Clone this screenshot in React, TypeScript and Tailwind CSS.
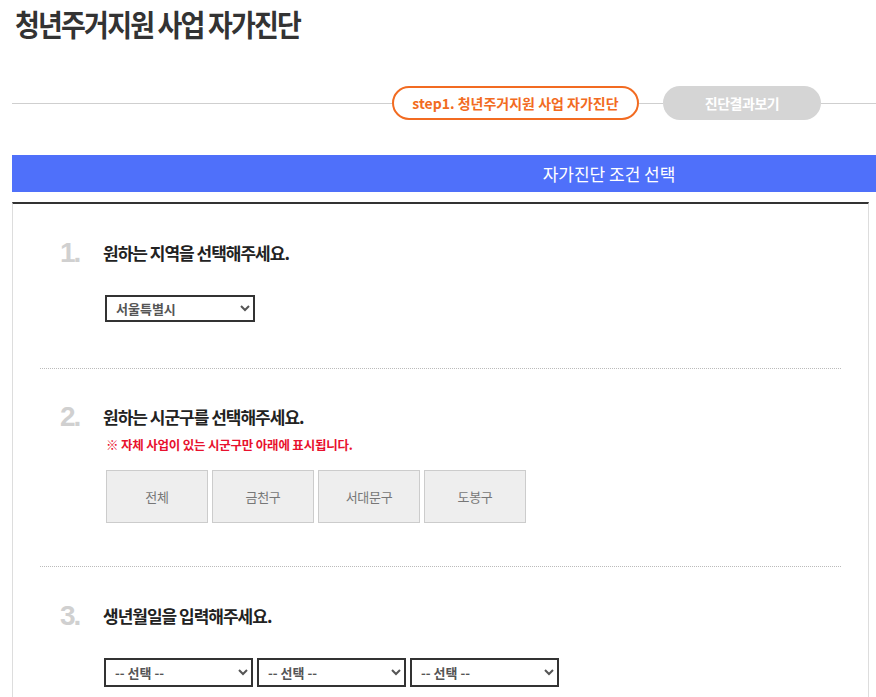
import React, { useState } from "react";

const kr = { fontFamily: '"Noto Sans CJK KR", "Noto Sans", sans-serif' };
const num = { fontFamily: '"Liberation Sans", Arial, sans-serif' };

const districts = ["전체", "금천구", "서대문구", "도봉구"];

function Step({ n, title, children }: { n: string; title: string; children?: React.ReactNode }) {
  return (
    <div className="flex pl-[47px]">
      <div className="w-[43px] shrink-0 text-[28px] font-bold leading-[32px] tracking-[-2px] text-[#d0d0d0]" style={num}>
        {n}
      </div>
      <div className="flex-1">
        <h3 className="pt-[4px] text-[17px] font-bold leading-[24px] tracking-[-1px] text-[#222]">{title}</h3>
        {children}
      </div>
    </div>
  );
}

function Select({ value, options, className }: { value: string; options: string[]; className: string }) {
  return (
    <select
      defaultValue={value}
      className={`border-2 border-[#333] bg-white pl-[5px] text-[13px] font-bold text-[#555] outline-none ${className}`}
    >
      {options.map((o) => (
        <option key={o}>{o}</option>
      ))}
    </select>
  );
}

export default function App() {
  const [district, setDistrict] = useState<string | null>(null);

  return (
    <div className="min-h-screen w-full overflow-x-hidden bg-white" style={kr}>
      <div className="pl-[12px]">
        <div className="w-[1194px]">
          {/* Title */}
          <h1 className="h-[86px] pl-[3px] pt-[1px] text-[30px] font-bold leading-[44px] tracking-[-2px] text-[#333]">
            <span className="inline-block origin-left scale-x-[0.9]">청년주거지원 사업 자가진단</span>
          </h1>

          {/* Steps */}
          <div className="flex h-[34px] items-center">
            <div className="h-px w-[380px] bg-[#cfcfcf]" />
            <div className="flex h-[34px] w-[247px] items-center justify-center rounded-full border-2 border-[#f26b21] bg-white text-[14px] font-bold text-[#f26b21]">
              step1. 청년주거지원 사업 자가진단
            </div>
            <div className="h-px w-[24px] bg-[#cfcfcf]" />
            <div className="flex h-[34px] w-[158px] items-center justify-center rounded-full bg-[#d5d5d5] text-[14px] font-bold tracking-[-0.5px] text-white">
              진단결과보기
            </div>
            <div className="h-px flex-1 bg-[#cfcfcf]" />
          </div>

          {/* Bar */}
          <div className="mt-[35px] flex h-[37px] items-center justify-center bg-[#4f70fa] text-[17px] text-white">
            자가진단 조건 선택
          </div>
        </div>

        {/* Form box */}
        <div className="mt-[10px] w-[857px] border-x border-t-2 border-x-[#ddd] border-t-[#333] pb-[20px]">
          <div className="pt-[33px] pb-[46px]">
            <Step n="1." title="원하는 지역을 선택해주세요.">
              <Select value="서울특별시" options={["서울특별시", "부산광역시", "경기도"]} className="ml-[2px] mt-[30px] h-[27px] w-[150px]" />
            </Step>
          </div>

          <div className="mx-[27px] border-t border-dotted border-[#bbb]" />

          <div className="pt-[32px] pb-[43px]">
            <Step n="2." title="원하는 시군구를 선택해주세요.">
              <p className="ml-[3px] mt-[7px] text-[12.5px] font-bold leading-[18px] tracking-[-0.2px] text-[#e8112d]">
                ※ 자체 사업이 있는 시군구만 아래에 표시됩니다.
              </p>
              <div className="ml-[3px] mt-[16px] flex gap-[4px]">
                {districts.map((d) => (
                  <button
                    key={d}
                    onClick={() => setDistrict(d)}
                    className={`h-[53px] w-[102px] border border-[#ccc] text-[13px] tracking-[-0.3px] ${
                      district === d ? "bg-[#e2e2e2] text-[#444]" : "bg-[#eee] text-[#777]"
                    }`}
                  >
                    {d}
                  </button>
                ))}
              </div>
            </Step>
          </div>

          <div className="mx-[27px] border-t border-dotted border-[#bbb]" />

          <div className="pt-[33px]">
            <Step n="3." title="생년월일을 입력해주세요.">
              <div className="ml-[1px] mt-[30px] flex gap-[4px]">
                <Select value="-- 선택 --" options={["-- 선택 --"]} className="h-[29px] w-[149px]" />
                <Select value="-- 선택 --" options={["-- 선택 --"]} className="h-[29px] w-[149px]" />
                <Select value="-- 선택 --" options={["-- 선택 --"]} className="h-[29px] w-[149px]" />
              </div>
            </Step>
          </div>
        </div>
      </div>
    </div>
  );
}
